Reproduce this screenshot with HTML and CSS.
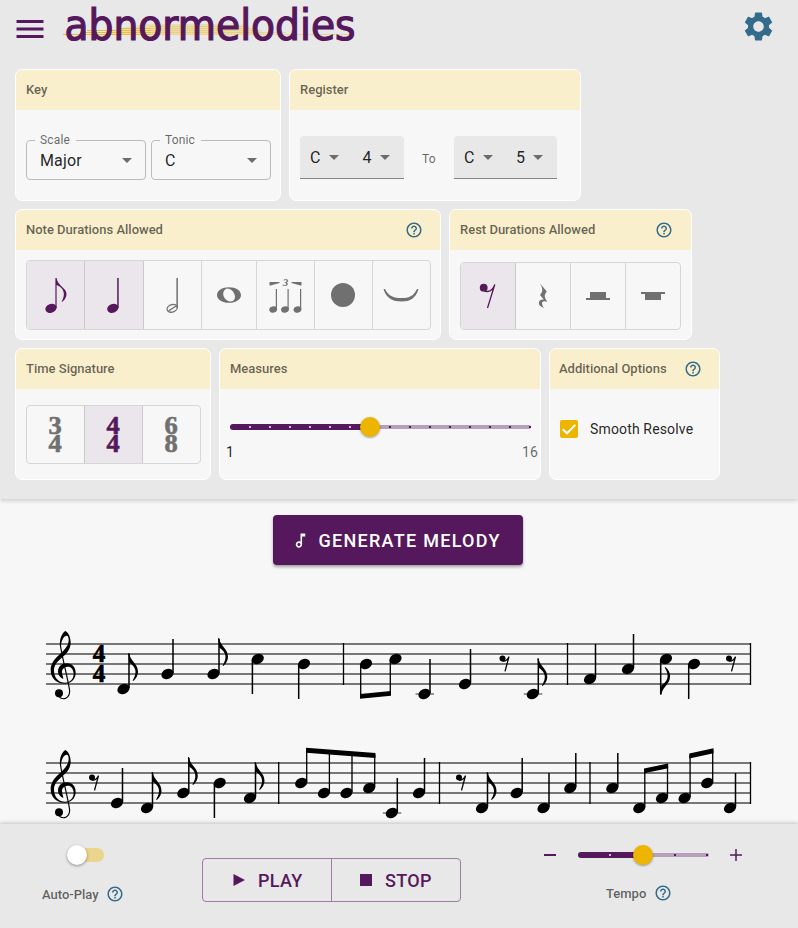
FILE: index.html
```html
<!DOCTYPE html>
<html lang="en">
<head>
<meta charset="utf-8">
<title>abnormelodies</title>
<link rel="stylesheet" href="styles.css">
</head>
<body>
<svg class="defs" aria-hidden="true">
  <defs>
    <symbol id="help" viewBox="0 0 24 24"><path d="M11 18h2v-2h-2v2zm1-16C6.480 2 2 6.480 2 12s4.480 10 10 10 10-4.480 10-10S17.520 2 12 2zm0 18c-4.410 0-8-3.590-8-8s3.590-8 8-8 8 3.590 8 8-3.590 8-8 8zm0-14c-2.210 0-4 1.790-4 4h2c0-1.100.900-2 2-2s2 .900 2 2c0 2-3 1.750-3 5h2c0-2.250 3-2.500 3-5 0-2.210-1.790-4-4-4z"/></symbol>
    <symbol id="caret" viewBox="0 0 10 5"><path d="M0 0h10L5 5z"/></symbol>
    <ellipse id="head" rx="6.300" ry="4.900" transform="rotate(-25)"/>
    <path id="flag" d="M-.6-36H.4C1.500-27 9.200-26 9.200-17C9.200-14 7.500-10.500 4.500-8L3.800-8.600C9-17 7-22 .4-26.500Z"/>
    <g id="up"><use href="#head"/><path d="M5.500-1V-35" stroke="#000" stroke-width="1.500"/></g>
    <g id="down"><use href="#head"/><path d="M-5.300 1V35" stroke="#000" stroke-width="1.500"/></g>
    <g id="eighth"><use href="#up"/><use href="#flag" x="5.300"/></g>
    <g id="eighth-down"><use href="#down"/><use href="#flag" transform="translate(-5.100 0) scale(1 -1)"/></g>
    <g id="low"><path d="M-9 0H9.500" stroke="#777" stroke-width="1.500"/></g>
    <g id="rest"><circle r="3"/><path d="M0 2.500C3.500 3.300 5 1.200 6.500-1.800L2.500 12.800" fill="none" stroke="#000" stroke-width="1.300"/></g>
    <g id="clef">
      <circle cx="87" cy="220" r="12"/>
      <path d="M86 230C100 242 118 236 119 214C118 195 92 95 91 72" fill="none" stroke="#000" stroke-width="3.500"/>
      <path d="M106 33C116 38 122 52 122 68C122 92 105 105 92 116C78 128 72 138 72 152C72 175 88 188 105 188C122 188 131 175 131 162C131 147 122 139 112 140C102 141 95 148 96 158C97 166 100 172 100 177C90 172 84 164 84 155C84 140 95 130 111 130C126 130 137 142 137 159C137 178 122 191 104 191C80 191 62 175 62 150C62 128 78 113 90 102C106 88 116 75 116 60C116 50 113 46 107 48C100 50 95 62 93 76L90 76C88 55 97 38 106 33Z"/>
    </g>
  </defs>
</svg>

<section class="settings">
  <header class="topbar">
    <svg class="menu" viewBox="0 0 24 24"><path d="M3 18h18v-2H3v2zm0-5h18v-2H3v2zm0-7v2h18V6H3z"/></svg>
    <svg class="logo" viewBox="0 0 300 60">
      <g class="waves">
        <path d="M2 34.500H90M22 32.500H90M26 30.500H90M60 28.500H90"/>
        <path class="soft" d="M90 34.500H290M90 32.500H225M90 30.500H200M90 28.500H190M88 26.500H188"/>
        <path class="faint" d="M50 30Q75 25 88 24H150L185 25L192 29Q200 31 205 34H50Z"/>
      </g>
      <text x="3.500" y="39.500" textLength="291" lengthAdjust="spacingAndGlyphs">abnormelodies</text>
    </svg>
    <svg class="gear" viewBox="0 0 24 24"><path d="M19.140 12.940c.040-.300.060-.610.060-.940 0-.320-.020-.640-.070-.940l2.030-1.580c.180-.140.230-.410.120-.610l-1.920-3.320c-.120-.220-.370-.290-.590-.220l-2.390.960c-.500-.380-1.030-.700-1.620-.940l-.360-2.540c-.040-.240-.240-.410-.480-.410h-3.840c-.240 0-.430.170-.470.410l-.360 2.540c-.590.240-1.130.570-1.620.940l-2.390-.960c-.220-.080-.470 0-.590.220L2.740 8.870c-.120.210-.080.470.120.610l2.030 1.580c-.050.300-.090.630-.090.940s.020.640.070.940l-2.030 1.580c-.180.140-.230.410-.120.610l1.920 3.320c.120.220.370.290.590.220l2.390-.960c.500.380 1.030.700 1.620.940l.360 2.540c.050.240.240.410.480.410h3.840c.240 0 .440-.170.470-.410l.360-2.540c.590-.240 1.130-.560 1.620-.940l2.390.960c.220.080.470 0 .590-.220l1.920-3.320c.120-.220.070-.470-.120-.610l-2.010-1.580zM12 15.600c-1.980 0-3.600-1.620-3.600-3.600s1.620-3.600 3.600-3.600 3.600 1.620 3.600 3.600-1.620 3.600-3.600 3.600z"/></svg>
  </header>

  <div class="cards">
    <div class="row">
      <article class="card key">
        <h2>Key</h2>
        <div class="fields">
          <div class="select"><span class="label">Scale</span>Major<svg class="caret"><use href="#caret"/></svg></div>
          <div class="select"><span class="label">Tonic</span>C<svg class="caret"><use href="#caret"/></svg></div>
        </div>
      </article>
      <article class="card register">
        <h2>Register</h2>
        <div class="range">
          <div class="pitch">C<svg class="caret"><use href="#caret"/></svg><span class="octave">4</span><svg class="caret"><use href="#caret"/></svg></div>
          <span class="to">To</span>
          <div class="pitch upper">C<svg class="caret"><use href="#caret"/></svg><span class="octave">5</span><svg class="caret"><use href="#caret"/></svg></div>
        </div>
      </article>
    </div>

    <div class="row">
      <article class="card notes">
        <h2>Note Durations Allowed<svg class="help"><use href="#help"/></svg></h2>
        <div class="toggles">
          <div class="on"><svg viewBox="-20 -20 40 40"><ellipse cx="-5" cy="13.300" rx="5.800" ry="4.400" transform="rotate(-20 -5 13.300)"/><path d="M-.6-17H.6C1.500-9 10.700-7 10.500-1C10.300 3 8 6 5.500 7C10-1 8-7 .6-10V13H-.6Z"/></svg></div>
          <div class="on"><svg viewBox="-20 -20 40 40"><ellipse cx="-1.200" cy="13.300" rx="5.800" ry="4.400" transform="rotate(-20 -1.200 13.300)"/><path d="M3.200-17h1.500V13H3.200Z"/></svg></div>
          <div><svg viewBox="-20 -20 40 40"><ellipse class="line" cx="-.8" cy="13.300" rx="5.300" ry="3.700" transform="rotate(-20 -.8 13.300)"/><path class="line" d="M-4.500 16L3 11"/><path d="M3.400-17h1.500V13H3.400Z"/></svg></div>
          <div><svg viewBox="-20 -20 40 40"><path fill-rule="evenodd" d="M-12 0C-12-4.500-7-7.800 0-7.800S12-4.500 12 0S7 7.800 0 7.800S-12 4.500-12 0ZM-5.500-3C-7 1 -3 6.500 1.500 6.500C5 6.500 7 3 5.500-.5C4-5 0-7-2.500-6.300C-4-5.900-5-4.500-5.500-3Z"/></svg></div>
          <div><svg viewBox="-19.500 -20 40 40"><text class="triplet" x="0" y="-9">3</text><path d="M-16-13H-6V-12L-15-9.500H-16ZM16-13H6V-12L15-9.500H16ZM-9.700-6h1.200V14h-1.200ZM2-6h1.200V14H2ZM14.500-6h1.200V14h-1.200Z"/><ellipse cx="-12.300" cy="14.500" rx="4" ry="3.100" transform="rotate(-20 -12.300 14.500)"/><ellipse cx="-.5" cy="14.500" rx="4" ry="3.100" transform="rotate(-20 -.5 14.500)"/><ellipse cx="12" cy="14.500" rx="4" ry="3.100" transform="rotate(-20 12 14.500)"/></svg></div>
          <div><svg viewBox="-19 -20 40 40"><circle r="12"/></svg></div>
          <div><svg viewBox="-19.500 -20 40 40"><path d="M-18-6L-16.500-6C-13 1.500-7 3 0 3S12 1.500 15.500-6L17-6C14 4 8 6.500 0 6.500S-15 4-18-6Z"/></svg></div>
        </div>
      </article>
      <article class="card rests">
        <h2>Rest Durations Allowed<svg class="help"><use href="#help"/></svg></h2>
        <div class="toggles">
          <div class="on"><svg viewBox="-20 -20 40 40"><circle cx="-4.300" cy="-8.300" r="3.900"/><path class="line" d="M-4-5C1-3.500 5-6 6.800-11.500L-.5 12"/></svg></div>
          <div><svg viewBox="-20 -20 40 40"><path d="M-2.500-12L3.800-4.500C1-1 1 1 4.300 5.800C1 4.500-1.200 5.500-1 7.500C-.8 9.500 0 10.500 1 12C-3 10.500-4.800 8.500-4 6C-3.300 3.800-.5 3.300 1 3.800L-3-1C0-4.500 0-7-2.500-11.500Z"/></svg></div>
          <div><svg viewBox="-20 -20 40 40"><path d="M-8-4H8V2H12V4H-12V2H-8Z"/></svg></div>
          <div><svg viewBox="-20 -20 40 40"><path d="M-12-4H12V-2H8V4H-8V-2H-12Z"/></svg></div>
        </div>
      </article>
    </div>

    <div class="row">
      <article class="card time">
        <h2>Time Signature</h2>
        <div class="toggles">
          <div><svg viewBox="-20 -28 40 56"><text y="-1">3</text><text y="17">4</text></svg></div>
          <div class="on"><svg viewBox="-20 -28 40 56"><text y="-1">4</text><text y="17">4</text></svg></div>
          <div><svg viewBox="-20 -28 40 56"><text y="-1">6</text><text y="17">8</text></svg></div>
        </div>
      </article>
      <article class="card measures">
        <h2>Measures</h2>
        <svg class="slider" viewBox="0 0 304 24">
          <path class="rail" d="M2 12H299"/><path class="track" d="M3 12H140"/>
          <path class="ticks-on" d="M19 12H130"/><path class="ticks" d="M159 12H301"/>
          <circle class="thumb" cx="140" cy="12" r="10"/>
        </svg>
        <div class="marks"><span class="current">1</span><span>16</span></div>
      </article>
      <article class="card options">
        <h2>Additional Options<svg class="help"><use href="#help"/></svg></h2>
        <div class="check"><svg viewBox="3 3 18 18"><rect x="3" y="3" width="18" height="18" rx="2"/><path d="M5.700 12.200L10 16.300L18.300 7.900"/></svg>Smooth Resolve</div>
      </article>
    </div>
  </div>
</section>

<main class="stage">
  <div class="generate"><svg viewBox="0 0 24 24"><path d="M12 3l.01 10.550c-.590-.340-1.270-.550-2-.550C7.790 13 6 14.790 6 17s1.790 4 4.010 4S14 19.210 14 17V7h4V3h-6zm-1.990 16c-1.100 0-2-.900-2-2s.900-2 2-2 2 .900 2 2-.900 2-2 2z"/></svg>GENERATE MELODY</div>
  <svg class="score" viewBox="0 600 798 224">
    <path class="staff" d="M46 644H751M46 654H751M46 664H751M46 674H751M46 684H751M46 763H751M46 773H751M46 783H751M46 793H751M46 803H751"/>
    <path class="bars" d="M343.500 643V685M567.500 643V685M750.500 643V685M278.700 762V804M439.500 762V804M590 762V804M750.500 762V804"/>
    <use href="#clef" transform="translate(30 620) scale(.3333)"/>
    <use href="#clef" transform="translate(30 739) scale(.3333)"/>
    <text class="meter" x="99" y="662">4</text>
    <text class="meter" x="99" y="682">4</text>

    <use href="#eighth" x="123.500" y="689"/>
    <use href="#up" x="167.500" y="674"/>
    <use href="#eighth" x="213.500" y="674"/>
    <use href="#down" x="257.700" y="659"/>
    <use href="#down" x="304" y="664"/>
    <use href="#head" x="366" y="664"/>
    <use href="#head" x="395.500" y="659"/>
    <use href="#low" x="424.500" y="694"/>
    <use href="#up" x="424.500" y="694"/>
    <use href="#up" x="465" y="684"/>
    <use href="#rest" x="502.500" y="658.500"/>
    <use href="#low" x="532.800" y="694"/>
    <use href="#eighth" x="532.800" y="694"/>
    <use href="#up" x="590" y="679"/>
    <use href="#up" x="628" y="669"/>
    <use href="#eighth-down" x="666" y="659"/>
    <use href="#down" x="694" y="664"/>
    <use href="#rest" x="729" y="658.500"/>
    <path class="stems" d="M360.700 665V697M390.300 660V695"/>
    <path d="M360 694L391 691V695.700L360 698.700Z"/>

    <use href="#rest" x="92" y="777.500"/>
    <use href="#up" x="117" y="803"/>
    <use href="#eighth" x="147" y="808"/>
    <use href="#eighth" x="183.300" y="793"/>
    <use href="#down" x="219.700" y="783"/>
    <use href="#eighth" x="250" y="798"/>
    <use href="#head" x="301.200" y="783"/>
    <use href="#head" x="324" y="793"/>
    <use href="#head" x="346.500" y="793"/>
    <use href="#head" x="369.200" y="788"/>
    <use href="#low" x="391.800" y="813"/>
    <use href="#up" x="391.800" y="813"/>
    <use href="#up" x="419" y="793"/>
    <use href="#rest" x="459" y="777.500"/>
    <use href="#eighth" x="482" y="808"/>
    <use href="#up" x="516.700" y="793"/>
    <use href="#up" x="543.500" y="808"/>
    <use href="#up" x="570.300" y="788"/>
    <use href="#up" x="612.300" y="788"/>
    <use href="#head" x="639.300" y="808"/>
    <use href="#head" x="662" y="798"/>
    <use href="#head" x="684.600" y="798"/>
    <use href="#head" x="707.200" y="783"/>
    <use href="#up" x="730" y="808"/>
    <path class="stems" d="M306.700 782V750M329.400 792V752M352 792V753M374.700 787V755M644.800 807V770M667.500 797V766M690.100 797V755M712.700 782V750"/>
    <path d="M306 747.800L375.500 753V758L306 752.700ZM644 768.500L668.200 763.500V768.300L644 773.300ZM689.300 753.500L713.500 748.300V753.200L689.300 758.500Z"/>
  </svg>
</main>

<footer class="player">
  <div class="autoplay">
    <div class="switch"><i></i></div>
    <div class="caption">Auto-Play<svg class="help"><use href="#help"/></svg></div>
  </div>
  <div class="transport">
    <div><svg viewBox="0 0 14 14"><path d="M1.500 1L13 7L1.500 13Z"/></svg>PLAY</div>
    <div><svg viewBox="0 0 14 14"><path d="M1 1H13V13H1Z"/></svg>STOP</div>
  </div>
  <div class="tempo">
    <div class="tempo-row">
      <svg class="sign" viewBox="0 0 14 14"><path d="M1 7H13" stroke-width="2"/></svg>
      <svg class="slider" viewBox="0 0 134 24">
        <path class="rail" d="M4 12H131"/><path class="track" d="M5 12H66"/>
        <path class="ticks-on" d="M33 12H36"/><path class="ticks" d="M98 12H100M130 12H132"/>
        <circle class="thumb" cx="67" cy="12" r="10"/>
      </svg>
      <svg class="sign" viewBox="0 0 14 14"><path d="M1 7H13M7 1V13" stroke-width="1.500"/></svg>
    </div>
    <div class="caption">Tempo<svg class="help"><use href="#help"/></svg></div>
  </div>
</footer>
</body>
</html>
```
FILE: styles.css
```css
* { box-sizing: border-box; }
body {
  margin: 0;
  width: 798px;
  height: 928px;
  display: flex;
  flex-direction: column;
  overflow: hidden;
  background: #f7f7f7;
  font-family: Roboto, sans-serif;
  color: rgba(0, 0, 0, .87);
}
svg { display: block; flex: none; }
.defs { position: absolute; width: 0; height: 0; }

.settings {
  position: relative;
  height: 499px;
  flex: none;
  background: #e8e8e8;
  box-shadow: 0 2px 4px rgba(0, 0, 0, .16);
}
.topbar { display: flex; height: 69px; padding: 0 22px 0 11px; align-items: flex-start; }
.menu { width: 36px; height: 36px; margin: 11px 0 0 .5px; fill: #55185c; }
.logo { width: 300px; height: 60px; margin-left: 13.5px; overflow: visible; }
.logo text {
  font-family: "DejaVu Sans Condensed", "DejaVu Sans", sans-serif;
  font-size: 43px;
  fill: #55185c;
  stroke: #55185c;
  stroke-width: 1.2;
}
.waves path { fill: none; stroke: #edb81c; stroke-width: .9; }
.waves .soft { stroke: #ecd38a; }
.waves .faint { fill: #edc33c; stroke: none; opacity: .3; }
.gear { width: 35px; height: 35px; margin: 9px 0 0 auto; fill: #336b8b; }

.cards { display: flex; flex-direction: column; gap: 8px; padding-left: 15px; }
.row { display: flex; gap: 8px; height: 132px; }
.row:nth-child(2) { height: 131px; }
.card {
  border: 1px solid #fff;
  border-radius: 7px;
  background: #f7f7f7;
  overflow: hidden;
}
.card h2 {
  display: flex;
  align-items: center;
  height: 40px;
  margin: 0;
  padding: 0 17px 1px 10px;
  background: #faefcc;
  font-size: 13px;
  font-weight: 500;
  color: rgba(0, 0, 0, .6);
}
.help { width: 18px; height: 18px; fill: #336b8b; }
h2 .help { margin: 1px 0 0 auto; }
.key { width: 266px; }
.register { width: 292px; }
.notes { width: 426px; }
.rests { width: 243px; }
.rests h2 { padding-right: 18px; }
.time { width: 196px; }
.measures { width: 322px; }
.options { width: 171px; }
.options h2 { padding-left: 9px; }

.fields { display: flex; gap: 5px; padding: 30px 9px 30px 10px; }
.select {
  position: relative;
  display: flex;
  align-items: center;
  justify-content: space-between;
  flex: none;
  width: 120px;
  height: 40px;
  padding: 0 13px;
  border: 1px solid #bbb;
  border-radius: 4px;
  font-size: 16px;
  letter-spacing: .15px;
}
.label {
  position: absolute;
  left: 8px;
  top: -8px;
  padding: 0 6px 0 5px;
  background: #f7f7f7;
  font-size: 12px;
  line-height: 15px;
  color: rgba(0, 0, 0, .6);
}
.caret { width: 10px; height: 5px; fill: #6c6c6c; }
.range { display: flex; align-items: center; padding: 26px 10px; }
.pitch {
  display: flex;
  align-items: center;
  width: 104px;
  height: 43px;
  padding-left: 10px;
  background: #e8e8e8;
  border-bottom: 1px solid #858585;
  border-radius: 4px 4px 0 0;
  font-size: 16px;
}
.pitch.upper { width: 103px; }
.pitch .caret { margin-left: 8.5px; }
.octave { margin-left: 23.5px; }
.upper .octave { margin-left: 23px; }
.to { width: 50px; padding-top: 2px; text-align: center; font-size: 12px; letter-spacing: .4px; color: rgba(0, 0, 0, .6); }

.toggles {
  display: grid;
  margin: 10px 9px 0 10px;
  border: 1px solid #d6d6d6;
  border-radius: 4px;
  overflow: hidden;
  fill: #707070;
}
.toggles > div { display: flex; align-items: center; justify-content: center; border-left: 1px solid #d6d6d6; }
.toggles > div:first-child { border-left: 0; }
.toggles .on { background: #ebe6eb; fill: #55185c; border-color: #cbc7cb; }
.toggles .on + div { border-color: #cbc7cb; }
.toggles svg { width: 40px; height: 40px; }
.notes .toggles { height: 70px; grid-template-columns: 57px 59px 58px 55px 58px 58px 58px; }
.rests .toggles { height: 68px; margin-top: 12px; margin-right: 10px; grid-template-columns: 54px 55px 55px 55px; }
.line { fill: none; stroke: #707070; stroke-width: 1.3; }
.on .line { stroke: #55185c; }
.triplet { font: italic bold 11px "Liberation Serif", serif; text-anchor: middle; }
.time .toggles { height: 59px; margin-top: 16px; grid-template-columns: 57px 58px 58px; }
.time .toggles svg { height: 56px; margin-right: 1px; overflow: visible; }
.time text {
  font: bold 24.5px "Liberation Serif", serif;
  text-anchor: middle;
  transform: scaleX(1.08);
  stroke: #707070;
  stroke-width: .6;
}
.time .on text { stroke: #55185c; }

.slider .rail { stroke: #b6a0bb; stroke-width: 4; stroke-linecap: round; }
.slider .track { stroke: #55185c; stroke-width: 6; stroke-linecap: round; }
.slider .ticks-on { stroke: #cbb9cd; stroke-width: 2; stroke-dasharray: 2 18; }
.slider .ticks { stroke: #55185c; stroke-width: 2; stroke-dasharray: 2 18; }
.thumb { fill: #edb500; filter: drop-shadow(0 1px 1px rgba(0, 0, 0, .35)); }
.measures .slider { width: 304px; height: 24px; margin: 26px 0 0 10px; }
.marks { display: flex; justify-content: space-between; padding: 5px 2px 0 6px; font-size: 14px; line-height: 16px; letter-spacing: .15px; color: rgba(0, 0, 0, .6); }
.current { color: rgba(0, 0, 0, .87); }
.check { display: flex; align-items: center; gap: 12px; padding: 31px 0 0 10px; font-size: 14px; letter-spacing: .15px; }
.check svg { width: 18px; height: 18px; fill: #edb500; }
.check path { fill: none; stroke: #fff; stroke-width: 2; }

.stage { height: 325px; flex: none; overflow: hidden; }
.generate {
  display: flex;
  align-items: center;
  width: 250px;
  height: 50px;
  margin: 16px 0 0 273px;
  padding-left: 18px;
  border-radius: 4px;
  background: #55185c;
  box-shadow: 0 2px 3px rgba(0, 0, 0, .35);
  color: #fff;
  font-size: 18px;
  font-weight: 500;
  letter-spacing: 1.28px;
}
.generate svg { width: 19px; height: 19px; margin-right: 8.5px; fill: #fff; }
.score { width: 798px; height: 224px; margin-top: 35px; }
.staff { stroke: #777; stroke-width: 1.8; }
.bars, .stems { stroke: #000; stroke-width: 1.3; }
.meter { font: bold 25px "Liberation Serif", serif; text-anchor: middle; stroke: #000; stroke-width: .7; }

.player {
  position: relative;
  display: flex;
  height: 104px;
  background: #e8e8e8;
  box-shadow: 0 -1px 4px rgba(0, 0, 0, .22);
}
.caption { display: flex; align-items: center; gap: 8px; font-size: 13px; font-weight: 500; color: rgba(0, 0, 0, .6); }
.autoplay { width: 202px; padding: 21px 0 0 42px; }
.switch { display: flex; align-items: center; width: 35px; height: 20px; margin-left: 27px; }
.switch::before { content: ""; width: 35px; height: 14px; border-radius: 7px; background: #ead58d; }
.switch i { position: absolute; left: 67px; width: 20px; height: 20px; border-radius: 50%; background: #fff; box-shadow: 0 1px 3px rgba(0, 0, 0, .4); }
.autoplay .caption { margin-top: 20px; gap: 7px; }
.transport { display: flex; width: 259px; height: 44px; margin-top: 34px; border: 1px solid #9f7aa4; border-radius: 4px; }
.transport div { display: flex; align-items: center; width: 128px; padding-left: 29px; color: #55185c; font-size: 18px; font-weight: 500; letter-spacing: .35px; }
.transport div + div { width: 129px; padding-left: 27px; border-left: 1px solid #9f7aa4; }
.transport svg { width: 14px; height: 14px; margin-right: 12px; fill: #55185c; }
.tempo { padding: 19px 0 0 82px; }
.tempo-row { display: flex; align-items: center; }
.sign { width: 14px; height: 14px; stroke: #55185c; }
.tempo .slider { width: 134px; height: 24px; margin: 0 19px; }
.tempo .caption { margin: 17px 0 0 63px; }
```
